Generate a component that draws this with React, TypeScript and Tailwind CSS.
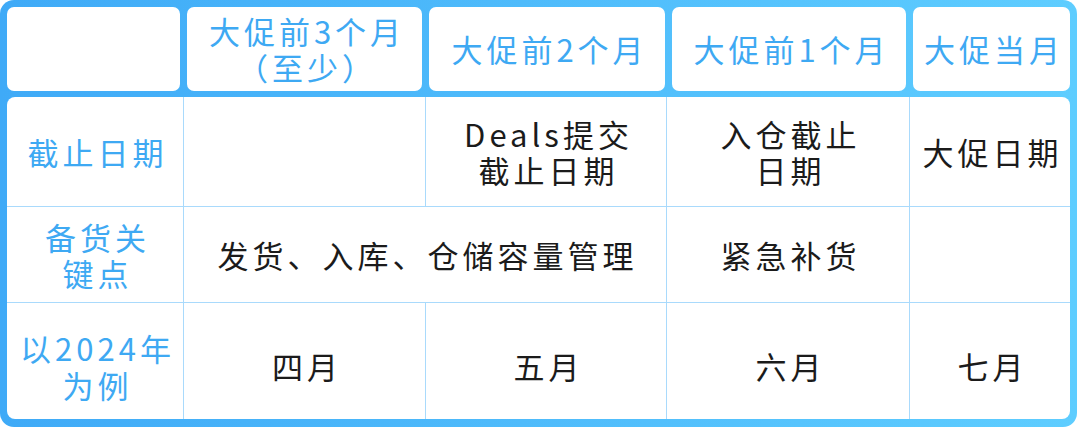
import React from "react";

const font = { fontFamily: '"Noto Sans CJK SC", "Noto Sans", sans-serif' };

export default function App() {
  const line = "border-[#a9dafc]";
  const cell = "flex items-center justify-center text-center text-[31px] leading-[36px] tracking-[4px] pl-[5px]";
  const blue = "text-[#3ea9f3]";
  const dark = "text-[#1b1b1b]";
  return (
    <div className="w-[1080px] h-[427px] bg-white" style={font}>
      <div className="w-[1077px] h-[427px] rounded-[14px] bg-gradient-to-r from-[#3faaf7] to-[#5ecdff] pl-[7px] pr-[7px] pt-[7px] pb-[8px] flex flex-col gap-[6px]">
        {/* header */}
        <div className="flex h-[84px] gap-[7px]">
          <div className="w-[173px] bg-white rounded-[7px]" />
          <div className={`w-[235px] bg-white rounded-[7px] ${cell} ${blue} leading-[35px]`}>
            <div>大促前3个月<br />（至少）</div>
          </div>
          <div className={`w-[236px] bg-white rounded-[7px] ${cell} ${blue}`}>大促前2个月</div>
          <div className={`w-[234px] bg-white rounded-[7px] ${cell} ${blue}`}>大促前1个月</div>
          <div className={`flex-1 bg-white rounded-[7px] ${cell} ${blue}`}>大促当月</div>
        </div>
        {/* body */}
        <div className="flex-1 bg-white rounded-[8px] grid grid-cols-[177px_242px_241px_243px_1fr] grid-rows-[110px_96px_1fr] overflow-hidden">
          {/* row 1 */}
          <div className={`${cell} ${blue} border-r border-b ${line}`}>截止日期</div>
          <div className={`${cell} border-r border-b ${line}`} />
          <div className={`${cell} ${dark} border-r border-b ${line}`}>
            <div>Deals提交<br />截止日期</div>
          </div>
          <div className={`${cell} ${dark} border-r border-b ${line}`}>
            <div>入仓截止<br />日期</div>
          </div>
          <div className={`${cell} ${dark} border-b ${line}`}>大促日期</div>
          {/* row 2 */}
          <div className={`${cell} ${blue} border-r border-b ${line}`}>
            <div>备货关<br />键点</div>
          </div>
          <div className={`col-span-2 ${cell} ${dark} border-r border-b ${line}`}>发货、入库、仓储容量管理</div>
          <div className={`${cell} ${dark} border-r border-b ${line}`}>紧急补货</div>
          <div className={`${cell} border-b ${line}`} />
          {/* row 3 */}
          <div className={`${cell} ${blue} border-r ${line} pt-[10px] leading-[37px]`}>
            <div>以2024年<br />为例</div>
          </div>
          <div className={`${cell} ${dark} border-r ${line} pt-[10px]`}>四月</div>
          <div className={`${cell} ${dark} border-r ${line} pt-[10px]`}>五月</div>
          <div className={`${cell} ${dark} border-r ${line} pt-[10px]`}>六月</div>
          <div className={`${cell} ${dark} pt-[10px]`}>七月</div>
        </div>
      </div>
    </div>
  );
}
